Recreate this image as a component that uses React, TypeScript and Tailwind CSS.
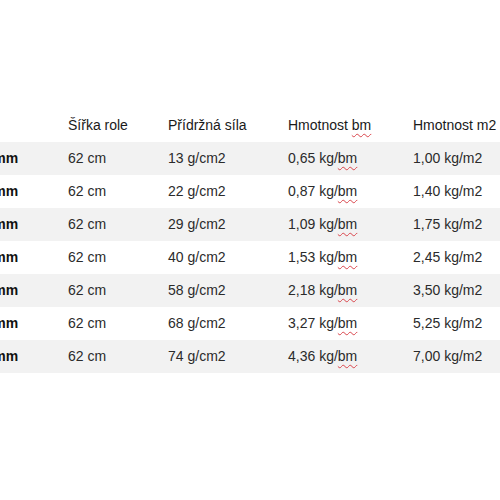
const rows = [
  ['1,0 mm', '62 cm', '13 g/cm2', '0,65', '1,00 kg/m2'],
  ['1,4 mm', '62 cm', '22 g/cm2', '0,87', '1,40 kg/m2'],
  ['1,8 mm', '62 cm', '29 g/cm2', '1,09', '1,75 kg/m2'],
  ['2,5 mm', '62 cm', '40 g/cm2', '1,53', '2,45 kg/m2'],
  ['3,5 mm', '62 cm', '58 g/cm2', '2,18', '3,50 kg/m2'],
  ['5,0 mm', '62 cm', '68 g/cm2', '3,27', '5,25 kg/m2'],
  ['7,0 mm', '62 cm', '74 g/cm2', '4,36', '7,00 kg/m2'],
];

const Squiggle = ({ children }: { children: string }) => (
  <span className="underline decoration-wavy decoration-[#d9454c] decoration-1 underline-offset-[3px]">
    {children}
  </span>
);

const grid = 'grid grid-cols-[98px_100px_120px_125px_87px] items-center h-[33px] -ml-[30px]';

export default function App() {
  return (
    <div
      className="w-[500px] h-[500px] bg-white overflow-hidden pt-[109px] text-[14px] text-[#2b2b2b]"
      style={{ fontFamily: '"Liberation Sans", Arial, sans-serif' }}
    >
      <div className={`${grid} font-medium text-[#1a1a1a]`}>
        <div></div>
        <div>Šířka role</div>
        <div>Přídržná síla</div>
        <div>
          Hmotnost <Squiggle>bm</Squiggle>
        </div>
        <div>Hmotnost m2</div>
      </div>
      {rows.map((r, i) => (
        <div key={i} className={i % 2 === 0 ? 'bg-[#f2f2f2]' : 'bg-white'}>
          <div className={grid}>
            <div className="font-semibold text-[#111]">{r[0]}</div>
            <div>{r[1]}</div>
            <div>{r[2]}</div>
            <div>
              {r[3]} kg/<Squiggle>bm</Squiggle>
            </div>
            <div>{r[4]}</div>
          </div>
        </div>
      ))}
    </div>
  );
}
